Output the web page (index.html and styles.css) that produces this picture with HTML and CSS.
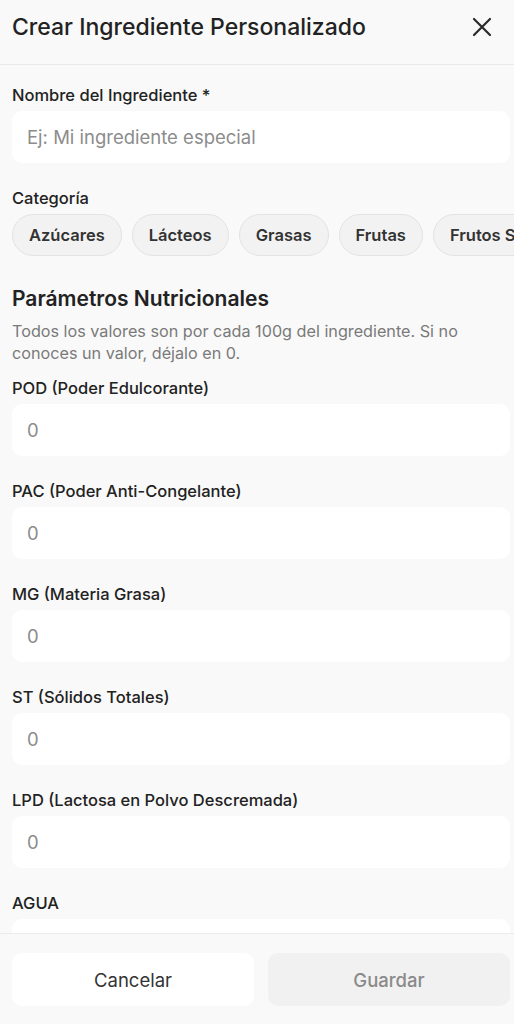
FILE: index.html
```html
<!DOCTYPE html>
<html lang="es">

<head>
    <meta charset="UTF-8">
    <meta name="viewport" content="width=device-width, initial-scale=1.0">
    <title>Crear Ingrediente Personalizado</title>
    <link rel="stylesheet" href="styles.css">
</head>

<body>
    <div class="sheet">
        <div class="sheetHeader">
            <h1 class="sheetTitle">Crear Ingrediente Personalizado</h1>
            <button class="closeBtn" aria-label="Cerrar">
                <svg width="20" height="20" viewBox="0 0 20 20">
                    <path d="M2 2 L18 18 M18 2 L2 18" stroke="#2a2a2a" stroke-width="2.2" stroke-linecap="round" fill="none"/>
                </svg>
            </button>
        </div>

        <div class="sheetBody">
            <div class="field">
                <label class="lbl">Nombre del Ingrediente *</label>
                <input class="ipt" type="text" placeholder="Ej: Mi ingrediente especial">
            </div>

            <div class="field">
                <label class="lbl">Categoría</label>
                <div class="chips">
                    <span class="chip">Azúcares</span>
                    <span class="chip">Lácteos</span>
                    <span class="chip">Grasas</span>
                    <span class="chip">Frutas</span>
                    <span class="chip">Frutos Secos</span>
                    <span class="chip">Otros</span>
                </div>
            </div>

            <h2 class="sectionTitle">Parámetros Nutricionales</h2>
            <p class="sectionHint">Todos los valores son por cada 100g del ingrediente. Si no conoces un valor, déjalo en 0.</p>

            <div class="field">
                <label class="lbl">POD (Poder Edulcorante)</label>
                <input class="ipt" type="text" placeholder="0">
            </div>
            <div class="field">
                <label class="lbl">PAC (Poder Anti-Congelante)</label>
                <input class="ipt" type="text" placeholder="0">
            </div>
            <div class="field">
                <label class="lbl">MG (Materia Grasa)</label>
                <input class="ipt" type="text" placeholder="0">
            </div>
            <div class="field">
                <label class="lbl">ST (Sólidos Totales)</label>
                <input class="ipt" type="text" placeholder="0">
            </div>
            <div class="field">
                <label class="lbl">LPD (Lactosa en Polvo Descremada)</label>
                <input class="ipt" type="text" placeholder="0">
            </div>
            <div class="field">
                <label class="lbl">AGUA</label>
                <input class="ipt" type="text" placeholder="0">
            </div>
        </div>

        <div class="sheetFooter">
            <button class="btn btnCancel">Cancelar</button>
            <button class="btn btnSave" disabled>Guardar</button>
        </div>
    </div>
</body>

</html>
```

FILE: styles.css
```css
* {
    box-sizing: border-box;
}

body {
    margin: 0;
    background-color: #f9f9f9;
    font-family: Inter, "Noto Sans", sans-serif;
    color: #222;
}

.sheet {
    height: 100vh;
    display: flex;
    flex-direction: column;
}

.sheetHeader {
    display: flex;
    align-items: center;
    justify-content: space-between;
    padding: 12px 12px 22px 12px;
    border-bottom: 1px solid #e9e9e9;
}

.sheetTitle {
    margin: 0;
    font-size: 23px;
    font-weight: 500;
    line-height: 30px;
    color: #222;
}

.closeBtn {
    border: 0;
    background: none;
    padding: 0;
    width: 20px;
    height: 20px;
    margin-right: 10px;
}

.sheetBody {
    flex: 1;
    overflow: hidden;
    padding: 20px 4px 0 12px;
}

.field {
    margin-bottom: 25px;
}

.lbl {
    display: block;
    font-size: 16.5px;
    font-weight: 500;
    line-height: 20px;
    color: #222;
    margin-bottom: 6px;
}

.ipt {
    display: block;
    width: 498px;
    height: 52px;
    border: 0;
    border-radius: 10px;
    background-color: #fff;
    padding: 0 15px;
    font-family: inherit;
    font-size: 18.5px;
    color: #222;
}

.ipt::placeholder {
    color: #8c8c8c;
}

.chips {
    display: flex;
    gap: 10px;
    overflow: hidden;
    margin-right: -4px;
}

.chip {
    flex-shrink: 0;
    height: 42px;
    line-height: 40px;
    padding: 0 16px;
    border: 1px solid #e3e3e3;
    border-radius: 21px;
    background-color: #f2f2f2;
    font-size: 16.5px;
    font-weight: 600;
    color: #333;
}

.sectionTitle {
    margin: 30px 0 8px 0;
    font-size: 21px;
    font-weight: 600;
    line-height: 26px;
    color: #222;
}

.sectionHint {
    margin: 0 0 14px 0;
    font-size: 16.2px;
    line-height: 22px;
    color: #7a7a7a;
    padding-right: 20px;
}

.sheetFooter {
    display: flex;
    gap: 14px;
    padding: 19px 4px 18px 12px;
    border-top: 1px solid #ececec;
    background-color: #f9f9f9;
}

.btn {
    flex: 1;
    height: 53px;
    border: 0;
    border-radius: 10px;
    font-family: inherit;
    font-size: 18.5px;
}

.btnCancel {
    background-color: #fff;
    color: #333;
}

.btnSave {
    background-color: #f1f1f1;
    color: #8a8a8a;
    font-weight: 500;
}
```
